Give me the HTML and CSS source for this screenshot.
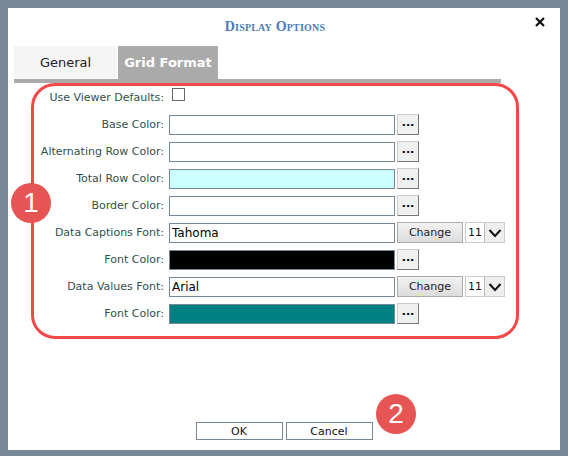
FILE: index.html
```html
<!DOCTYPE html>
<html lang="en">
<head>
<meta charset="UTF-8" />
<title>Display Options</title>
<link rel="stylesheet" href="styles.css">
</head>
<body>

<div class="dialog">
  <header class="dialog-header">
    <h1 class="dialog-title">Display Options</h1>
    <button class="close-btn" aria-label="Close">
      <svg width="10" height="10" viewBox="0 0 10 10"><path d="M1 1 L9 9 M9 1 L1 9" stroke="#111" stroke-width="2.2"/></svg>
    </button>
  </header>

  <div class="tabs">
    <div class="tab">General</div>
    <div class="tab active">Grid Format</div>
  </div>

  <div class="panel">
    <div class="form-grid">
      <label>Use Viewer Defaults:</label>
      <div class="cell"><span class="checkbox"></span></div>
      <span></span>

      <label>Base Color:</label>
      <input class="field" type="text" />
      <button class="dots">...</button>

      <label>Alternating Row Color:</label>
      <input class="field" type="text" />
      <button class="dots">...</button>

      <label>Total Row Color:</label>
      <input class="field swatch-cyan" type="text" />
      <button class="dots">...</button>

      <label>Border Color:</label>
      <input class="field" type="text" />
      <button class="dots">...</button>

      <label>Data Captions Font:</label>
      <input class="field" type="text" value="Tahoma" />
      <div class="font-tools">
        <button class="change-btn">Change</button>
        <div class="size-select"><span>11</span><span class="arrow"><svg width="14" height="10" viewBox="0 0 14 10"><path d="M1.5 2 L7 8 L12.5 2" fill="none" stroke="#111" stroke-width="2"/></svg></span></div>
      </div>

      <label>Font Color:</label>
      <input class="field swatch-black" type="text" />
      <button class="dots">...</button>

      <label>Data Values Font:</label>
      <input class="field" type="text" value="Arial" />
      <div class="font-tools">
        <button class="change-btn">Change</button>
        <div class="size-select"><span>11</span><span class="arrow"><svg width="14" height="10" viewBox="0 0 14 10"><path d="M1.5 2 L7 8 L12.5 2" fill="none" stroke="#111" stroke-width="2"/></svg></span></div>
      </div>

      <label>Font Color:</label>
      <input class="field swatch-teal" type="text" />
      <button class="dots">...</button>
    </div>

    <!-- annotation overlay -->
    <div class="highlight"></div>
    <div class="badge badge-1">1</div>
  </div>

  <footer class="dialog-footer">
    <button class="action-btn">OK</button>
    <button class="action-btn">Cancel</button>
    <div class="badge badge-2">2</div>
  </footer>
</div>

</body>
</html>
```

FILE: styles.css
```css
body {
  margin: 0;
  background: #778899;
  font-family: "DejaVu Sans", Verdana, sans-serif;
}
.dialog {
  margin: 8px;
  width: 552px;
  height: 442px;
  background: #fff;
  display: flex;
  flex-direction: column;
  position: relative;
}
/* Header */
.dialog-header {
  height: 38px;
  display: flex;
  align-items: center;
  position: relative;
}
.dialog-title {
  margin: 0;
  width: 534px;
  text-align: center;
  font-family: "Liberation Serif", "Times New Roman", serif;
  font-variant: small-caps;
  font-size: 14px;
  font-weight: 700;
  color: #4a7dba;
  letter-spacing: 0.2px;
}
.close-btn {
  position: absolute;
  right: 14px;
  top: 7px;
  border: none;
  background: none;
  padding: 0;
  width: 12px;
  height: 12px;
}
/* Tabs */
.tabs {
  margin: 0 0 0 6px;
  width: 487px;
  display: flex;
  border-bottom: 4px solid #aaa;
}
.tab {
  width: 103px;
  height: 33px;
  line-height: 34px;
  text-align: center;
  font-size: 13px;
  color: #222;
  background: #f5f5f5;
  margin-right: 1px;
}
.tab.active {
  width: 100px;
  background: #aaa;
  color: #fff;
  font-weight: 700;
}
/* Form panel */
.panel {
  position: relative;
  flex: 1;
}
.form-grid {
  display: grid;
  grid-template-columns: 156px 226px auto;
  grid-auto-rows: 27px;
  column-gap: 5px;
  align-items: center;
  padding-top: 1px;
}
.form-grid label {
  text-align: right;
  font-size: 11px;
  color: #2f4f4f;
  white-space: nowrap;
}
.cell {
  display: flex;
  align-items: center;
}
.checkbox {
  display: inline-block;
  width: 11px;
  height: 11px;
  border: 1px solid #666;
  margin: -6px 0 0 3px;
  background: #fff;
}
.field {
  box-sizing: border-box;
  width: 226px;
  height: 20px;
  border: 1px solid #778899;
  padding: 0 2px;
  font-family: "DejaVu Sans", Verdana, sans-serif;
  font-size: 12px;
  color: #000;
  background: #fff;
}
.swatch-cyan { background: #ccffff; }
.swatch-black { background: #000; }
.swatch-teal { background: #008080; }
.dots {
  width: 22px;
  height: 21px;
  margin-left: -3px;
  padding: 0 0 4px;
  background: #f0f0f0;
  border: 1px solid #ccc;
  border-right-color: #777;
  border-bottom-color: #777;
  font-family: "DejaVu Sans", sans-serif;
  font-size: 11px;
  font-weight: 700;
  color: #000;
  line-height: 14px;
}
.font-tools {
  display: flex;
  align-items: center;
  gap: 2px;
  margin-left: -3px;
}
.change-btn {
  width: 66px;
  height: 21px;
  padding: 0;
  background: linear-gradient(#f2f2f2, #dcdcdc);
  border: 1px solid #aaa;
  font-family: "DejaVu Sans", sans-serif;
  font-size: 11px;
  color: #222;
}
.size-select {
  box-sizing: border-box;
  width: 40px;
  height: 21px;
  border: 1px solid #ccc;
  display: flex;
  align-items: center;
  font-size: 11px;
  color: #111;
  background: #fff;
}
.size-select span:first-child {
  flex: 1;
  padding-left: 2px;
}
.size-select .arrow {
  width: 19px;
  height: 19px;
  background: #eee;
  border-left: 1px solid #bbb;
  display: flex;
  align-items: center;
  justify-content: center;
}
/* Annotations */
.highlight {
  position: absolute;
  left: 23px;
  top: 0;
  width: 482px;
  height: 250px;
  border: 3px solid #f44848;
  border-radius: 24px;
}
.badge {
  position: absolute;
  width: 40px;
  height: 40px;
  border-radius: 50%;
  background: #e65454;
  color: #fff;
  font-family: "Liberation Sans", Arial, sans-serif;
  font-size: 28px;
  line-height: 40px;
  text-align: center;
}
.badge-1 {
  left: 3px;
  top: 100px;
}
/* Footer */
.dialog-footer {
  height: 28px;
  display: flex;
  justify-content: center;
  align-items: flex-start;
  gap: 3px;
  position: relative;
}
.action-btn {
  width: 87px;
  height: 18px;
  padding: 0;
  background: #fff;
  border: 1px solid #778899;
  font-family: "DejaVu Sans", sans-serif;
  font-size: 11px;
  color: #111;
}
.badge-2 {
  left: 368px;
  top: -28px;
}
```
